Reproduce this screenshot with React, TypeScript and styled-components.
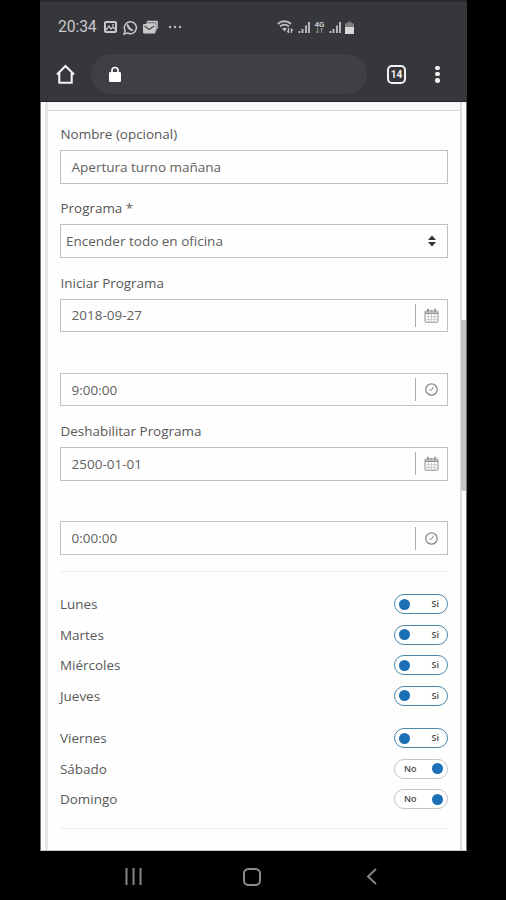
import React from "react";
import styled, { createGlobalStyle } from "styled-components";

const GlobalStyle = createGlobalStyle`
  *, *::before, *::after { box-sizing: border-box; }
  body { margin: 0; background: #000; }
`;

const Screen = styled.div`
  width: 506px;
  height: 900px;
  background: #000;
  overflow: hidden;
  font-family: "Open Sans", sans-serif;
`;

const Device = styled.div`
  width: 427px;
  height: 900px;
  margin-left: 40px;
  display: flex;
  flex-direction: column;
`;

const Header = styled.header`
  height: 102px;
  background: #36373b;
  border-top: 2px solid #29292e;
  border-bottom: 1px solid #222327;
  flex: none;
`;

const StatusBar = styled.div`
  height: 50px;
  padding: 0 113px 0 18px;
  display: flex;
  align-items: center;
  justify-content: space-between;
  color: #c9c9cb;
  font: 15.7px/20px Roboto, sans-serif;
`;

const StatusGroup = styled.div<{ $gap: number }>`
  display: flex;
  align-items: center;
  gap: ${(p) => p.$gap}px;
`;

const Time = styled.span`
  width: 39px;
  margin-right: 2px;
  letter-spacing: -0.1px;
`;

const NetworkType = styled.span`
  width: 11px;
  display: flex;
  flex-direction: column;
  align-items: center;
  font: bold 8px/7px Roboto, sans-serif;
`;

const AddressRow = styled.div`
  height: 42px;
  margin-top: 1px;
  display: flex;
  align-items: center;
  padding: 0 27px 0 15px;
`;

const AddressField = styled.div`
  width: 276px;
  height: 40px;
  margin: 0 20px 0 15px;
  padding-left: 17px;
  border-radius: 20px;
  background: #3f4044;
  display: flex;
  align-items: center;
`;

const TabCount = styled.div`
  width: 19px;
  height: 19px;
  border: 2px solid #f2f2f2;
  border-radius: 5px;
  color: #f2f2f2;
  font: bold 10px/15px Roboto, sans-serif;
  text-align: center;
`;

const MenuDots = styled.div`
  margin-left: auto;
  width: 5px;
  height: 17px;
  display: flex;
  flex-direction: column;
  justify-content: space-between;
  align-items: center;
`;

const Dot = styled.i`
  width: 4.6px;
  height: 4.6px;
  border-radius: 50%;
  background: #f4f4f4;
`;

const Page = styled.main`
  position: relative;
  height: 749px;
  flex: none;
  background: #fefefe;
  border-left: 1px solid #6f6f6f;
  border-right: 1px solid #777;
  border-bottom: 1px solid #c8c8c8;
  padding: 0 4px;
`;

const ScrollThumb = styled.div`
  position: absolute;
  right: 0;
  top: 218px;
  width: 5px;
  height: 171px;
  border-radius: 1px 0 0 3px;
  background: #c5c5c5;
`;

const Card = styled.div`
  height: 748px;
  border-left: 3px solid #e7e7e7;
  border-right: 2px solid #dcdcdc;
  padding: 0 12px;
`;

const TopRule = styled.div`
  height: 9px;
  margin: 0 -12px;
  background: #f8f8f8;
  border-bottom: 1px solid #d5d5d5;
`;

const Form = styled.form`
  padding-top: 4.6px;
`;

const Field = styled.div`
  height: 74.25px;
`;

const Label = styled.label`
  display: block;
  height: 34.5px;
  padding: 8.6px 0 0 0.5px;
  color: #585858;
  font-size: 13.45px;
  line-height: 20px;
  white-space: nowrap;
`;

const Control = styled.div<{ $select?: boolean }>`
  height: 33.5px;
  border: 1px solid #c0c0c0;
  padding: 0 ${(p) => (p.$select ? 11 : 8)}px 0 ${(p) => (p.$select ? 5 : 10.5)}px;
  display: flex;
  align-items: center;
  justify-content: space-between;
  color: #616161;
  font-size: 13.5px;
  line-height: 20px;
  white-space: nowrap;
`;

const Addon = styled.span`
  height: 23px;
  width: 24px;
  border-left: 1px solid #adadad;
  padding-left: 8px;
  display: flex;
  align-items: center;
`;

const Divider = styled.div`
  height: 1px;
  background: #ededed;
`;

const Days = styled.div`
  margin-top: 9.5px;
  padding-top: 17.3px;
  border-top: 1px solid #ededed;
  height: 257px;
`;

const DayRow = styled.div<{ $spaced?: boolean }>`
  height: 30.6px;
  margin-top: ${(p) => (p.$spaced ? 11.5 : 0)}px;
  display: flex;
  align-items: center;
  justify-content: space-between;
  color: #585858;
  font-size: 13.45px;
  line-height: 20px;
`;

const Toggle = styled.span<{ $on: boolean }>`
  width: 54px;
  height: 20px;
  border: 1px solid ${(p) => (p.$on ? "#4c86a8" : "#c6c6c6")};
  border-radius: 10px;
  background: #fff;
  padding: 0 ${(p) => (p.$on ? 8 : 4)}px 0 ${(p) => (p.$on ? 4 : 9)}px;
  display: flex;
  flex-direction: ${(p) => (p.$on ? "row" : "row-reverse")};
  align-items: center;
  justify-content: space-between;
  color: #4a4a4a;
  font-size: 9px;
  font-weight: 600;
`;

const Knob = styled.i`
  width: 11px;
  height: 11px;
  border-radius: 50%;
  background: #1c6fb5;
`;

const NavBar = styled.nav`
  height: 49px;
  padding: 2px 0 0 85px;
  display: grid;
  grid-template-columns: 118px 123px auto;
  align-items: center;
`;

const Signal = () => (
  <svg width="13" height="13" viewBox="0 0 13 13" stroke="#bdbdbf" strokeWidth="1.9">
    <path d="M1.5 10v2M4.5 8v4M8 4.5V12M11 1v11" />
  </svg>
);

const CalendarIcon = () => (
  <svg width="15" height="15" viewBox="0 0 15 15" fill="none" stroke="#909090">
    <rect x="1" y="3" width="13" height="11.2" rx="0.8" />
    <path d="M1 5.2h13" strokeWidth="1.5" />
    <path d="M4 .7v3.5M7.5 2v1.6M11 .7v3.5" strokeWidth="1.7" />
    <path d="M4.4 6v8M7.5 6v8M10.6 6v8M1.5 8.7h12M1.5 11.4h12" stroke="#bbb" strokeWidth=".7" />
  </svg>
);

const ClockIcon = () => (
  <svg width="15" height="15" viewBox="0 0 15 15" fill="none" stroke="#8b8b8b">
    <circle cx="7.5" cy="7.5" r="5.7" strokeWidth="1.3" />
    <path d="M9.5 4.5 7.6 8.1H5.2" strokeWidth="1" />
  </svg>
);

type FieldData = { label: string; value: string; kind: "text" | "select" | "date" | "time" };

const fields: FieldData[] = [
  { label: "Nombre (opcional)", value: "Apertura turno mañana", kind: "text" },
  { label: "Programa *", value: "Encender todo en oficina", kind: "select" },
  { label: "Iniciar Programa", value: "2018-09-27", kind: "date" },
  { label: "", value: "9:00:00", kind: "time" },
  { label: "Deshabilitar Programa", value: "2500-01-01", kind: "date" },
  { label: "", value: "0:00:00", kind: "time" },
];

const days = [
  { name: "Lunes", on: true },
  { name: "Martes", on: true },
  { name: "Miércoles", on: true },
  { name: "Jueves", on: true },
  { name: "Viernes", on: true, spaced: true },
  { name: "Sábado", on: false },
  { name: "Domingo", on: false },
];

export default function App() {
  return (
    <Screen>
      <GlobalStyle />
      <Device>
        <Header>
          <StatusBar>
            <StatusGroup $gap={5}>
              <Time>20:34</Time>
              <svg width="14" height="12" viewBox="0 0 14 12" fill="none" stroke="#c9c9cb">
                <rect x="1" y="1" width="11" height="10" rx="1" strokeWidth="2" />
                <path d="M2 9l3-4 2 3 2-2 3 3M9 3v2" strokeWidth="1.3" />
              </svg>
              <svg width="15" height="15" viewBox="0 0 15 15" fill="none" stroke="#c9c9cb">
                <path d="M1 14l1.1-3.5A6 6 0 1 1 4.6 13z" strokeWidth="1.5" />
                <path d="M5.2 4.5c-.7.7-.4 2 .9 3.5s2.8 2.4 3.8 1.8" strokeWidth="2" />
              </svg>
              <svg width="16" height="14" viewBox="0 0 16 14">
                <path d="M4 1.500h10v7.500" fill="none" stroke="#c9c9cb" strokeWidth="1.6" />
                <path d="M3 3.300h9.700v8" fill="none" stroke="#a9a9ac" strokeWidth="1.6" />
                <rect x="0" y="4" width="12.400" height="9.500" rx="1" fill="#c9c9cb" />
                <path d="M1.500 6l4.700 3.600L11 6" fill="none" stroke="#45464a" strokeWidth="1.2" />
              </svg>
              <svg width="18" height="4" viewBox="0 0 18 4" fill="#bdbdbf">
                <circle cx="6" cy="2" r="1.2" />
                <circle cx="11" cy="2" r="1.2" />
                <circle cx="16" cy="2" r="1.2" />
              </svg>
            </StatusGroup>
            <StatusGroup $gap={3.5}>
              <svg width="17" height="14" viewBox="0 0 17 14" fill="none" stroke="#bdbdbf">
                <path d="M.8 4C4.5.4 10.200.4 14 4" strokeWidth="1.9" />
                <path d="M3 6.500C6 4 9 4 12 6.500" strokeWidth="1.7" />
                <path d="M5 8.500q2.500-1.500 5 0L7.500 11.500z" fill="#bdbdbf" stroke="none" />
                <path d="M11.500 8v4M14.500 9v4M10 11l1.500 1.500 1-1M13.500 10.200l1-1 1.300 1.300" strokeWidth="1.200" />
              </svg>
              <Signal />
              <NetworkType>
                4G
                <svg width="9" height="6" viewBox="0 0 9 6" fill="none" stroke="#8b8b8e">
                  <path d="M2.500 0v5M1 3.500l1.500 1.500L4 3.500M6.500 5V0M5 1.500L6.500 0 8 1.500" />
                </svg>
              </NetworkType>
              <Signal />
              <svg width="9" height="13" viewBox="0 0 9 13">
                <path d="M0 3.500Q0 2 2 2 2.500.500 4.500.500T7 2Q9 2 9 3.500V6H0z" fill="#7d7e81" />
                <path d="M0 6h9v7H0z" fill="#d8d8d9" />
              </svg>
            </StatusGroup>
          </StatusBar>
          <AddressRow>
            <svg width="21" height="21" viewBox="0 0 21 21" fill="none" stroke="#f4f4f4" strokeWidth="2.100">
              <path d="M2 10.500 10.500 2 19 10.500M4.300 9v9.800h12.400V9" />
            </svg>
            <AddressField>
              <svg width="14" height="17" viewBox="0 0 14 17">
                <path d="M4 7V4.500a3 3 0 0 1 6 0V7" fill="none" stroke="#fff" strokeWidth="1.700" />
                <rect x="1" y="6" width="12" height="10" rx="1.200" fill="#fff" />
              </svg>
            </AddressField>
            <TabCount>14</TabCount>
            <MenuDots>
              <Dot />
              <Dot />
              <Dot />
            </MenuDots>
          </AddressRow>
        </Header>
        <Page>
          <Card>
            <TopRule />
            <Form>
              {fields.map((f, i) => (
                <Field key={i}>
                  <Label>{f.label}</Label>
                  <Control $select={f.kind === "select"}>
                    <span>{f.value}</span>
                    {f.kind === "select" && (
                      <svg width="8" height="12" viewBox="0 0 8 12" fill="#333">
                        <path d="M0 5 4 .500 8 5zM0 7h8L4 11.500z" />
                      </svg>
                    )}
                    {f.kind === "date" && <Addon><CalendarIcon /></Addon>}
                    {f.kind === "time" && <Addon><ClockIcon /></Addon>}
                  </Control>
                </Field>
              ))}
              <Days>
                {days.map((d) => (
                  <DayRow key={d.name} $spaced={d.spaced}>
                    <span>{d.name}</span>
                    <Toggle $on={d.on}>
                      <Knob />
                      <span>{d.on ? "Si" : "No"}</span>
                    </Toggle>
                  </DayRow>
                ))}
              </Days>
              <Divider />
            </Form>
          </Card>
          <ScrollThumb />
        </Page>
        <NavBar>
          <svg width="17" height="17" viewBox="0 0 17 17" stroke="#858585" strokeWidth="2">
            <path d="M1.500 0v17M8.500 0v17M15.500 0v17" />
          </svg>
          <svg width="18" height="18" viewBox="0 0 18 18" fill="none" stroke="#8b8b8b" strokeWidth="2">
            <rect x="1" y="1" width="16" height="16" rx="4.500" />
          </svg>
          <svg width="11" height="17" viewBox="0 0 11 17" fill="none" stroke="#858585" strokeWidth="2">
            <path d="M10 1 2 8.500 10 16" />
          </svg>
        </NavBar>
      </Device>
    </Screen>
  );
}
